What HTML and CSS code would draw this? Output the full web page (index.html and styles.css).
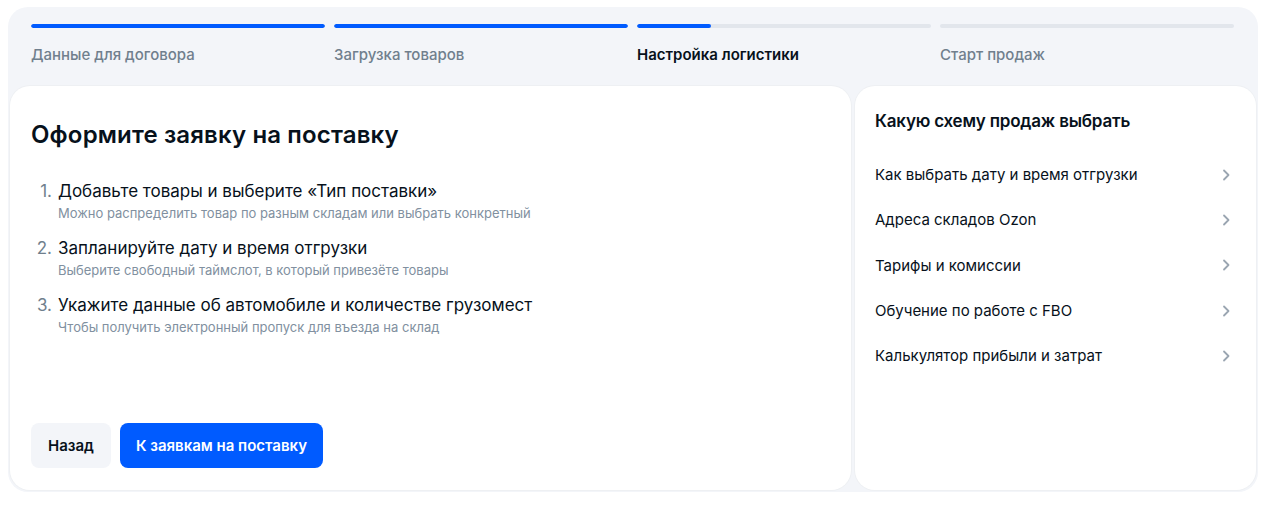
FILE: index.html
```html
<!DOCTYPE html>
<html lang="ru">
<head>
  <meta charset="UTF-8">
  <meta name="viewport" content="width=device-width, initial-scale=1.0">
  <title>Настройка логистики</title>
  <link rel="stylesheet" href="styles.css">
</head>
<body>
  <div class="wizard">
    <!-- шаги -->
    <div class="steps">
      <div class="step done">
        <div class="bar"><span class="fill"></span></div>
        <div class="label">Данные для договора</div>
      </div>
      <div class="step done">
        <div class="bar"><span class="fill"></span></div>
        <div class="label">Загрузка товаров</div>
      </div>
      <div class="step active">
        <div class="bar"><span class="fill"></span></div>
        <div class="label">Настройка логистики</div>
      </div>
      <div class="step">
        <div class="bar"><span class="fill"></span></div>
        <div class="label">Старт продаж</div>
      </div>
    </div>

    <div class="content">
      <div class="card main">
        <h1>Оформите заявку на поставку</h1>
        <ol class="todo">
          <li>
            <span class="num">1.</span>
            <div>
              <div class="todo-title">Добавьте товары и выберите «Тип поставки»</div>
              <div class="todo-hint">Можно распределить товар по разным складам или выбрать конкретный</div>
            </div>
          </li>
          <li>
            <span class="num">2.</span>
            <div>
              <div class="todo-title">Запланируйте дату и время отгрузки</div>
              <div class="todo-hint">Выберите свободный таймслот, в который привезёте товары</div>
            </div>
          </li>
          <li>
            <span class="num">3.</span>
            <div>
              <div class="todo-title">Укажите данные об автомобиле и количестве грузомест</div>
              <div class="todo-hint">Чтобы получить электронный пропуск для въезда на склад</div>
            </div>
          </li>
        </ol>
        <div class="actions">
          <button class="btn secondary">Назад</button>
          <button class="btn primary">К заявкам на поставку</button>
        </div>
      </div>

      <div class="card side">
        <h2>Какую схему продаж выбрать</h2>
        <ul class="links">
          <li><span>Как выбрать дату и время отгрузки</span><svg viewBox="0 0 16 16"><path d="M6 3.5l4.5 4.5L6 12.5"/></svg></li>
          <li><span>Адреса складов Ozon</span><svg viewBox="0 0 16 16"><path d="M6 3.5l4.5 4.5L6 12.5"/></svg></li>
          <li><span>Тарифы и комиссии</span><svg viewBox="0 0 16 16"><path d="M6 3.5l4.5 4.5L6 12.5"/></svg></li>
          <li><span>Обучение по работе с FBO</span><svg viewBox="0 0 16 16"><path d="M6 3.5l4.5 4.5L6 12.5"/></svg></li>
          <li><span>Калькулятор прибыли и затрат</span><svg viewBox="0 0 16 16"><path d="M6 3.5l4.5 4.5L6 12.5"/></svg></li>
        </ul>
      </div>
    </div>
  </div>
</body>
</html>
```

FILE: styles.css
```css
body {
  margin: 0;
  background: #ffffff;
  font-family: Inter, 'Noto Sans', sans-serif;
  color: #001a34;
}

.wizard {
  width: 1250px;
  margin: 7px 0 0 8px;
  background: #f3f5f9;
  border-radius: 20px;
  padding: 0 2px 2px;
  box-sizing: border-box;
}

/* шаги */
.steps {
  display: grid;
  grid-template-columns: repeat(4, 1fr);
  gap: 9px;
  padding: 17px 22px 0 21px;
  height: 79px;
  box-sizing: border-box;
}

.bar {
  height: 4px;
  border-radius: 2px;
  background: #e2e6ec;
  overflow: hidden;
}

.fill {
  display: block;
  height: 100%;
  width: 0;
  background: #005bff;
  border-radius: 2px;
}

.step.done .fill { width: 100%; }
.step.active .fill { width: 25%; }

.label {
  margin-top: 17px;
  font-size: 15px;
  font-weight: 500;
  color: #707f8d;
}

.step.active .label {
  color: #07111b;
  font-weight: 600;
}

/* карточки */
.content {
  display: flex;
  gap: 4px;
}

.card {
  background: #ffffff;
  border-radius: 20px;
  height: 404px;
  box-sizing: border-box;
  box-shadow: 0 0 0 1px #eef0f3;
}

.main {
  width: 841px;
  padding: 34px 21px 22px;
  display: flex;
  flex-direction: column;
}

.main h1 {
  margin: 0;
  font-size: 24px;
  font-weight: 600;
  color: #07111b;
  letter-spacing: 0.15px;
}

.todo {
  list-style: none;
  margin: 30px 0 0;
  padding: 0;
}

.todo li {
  display: flex;
  gap: 6px;
  margin-bottom: 14px;
}

.num {
  width: 21px;
  text-align: right;
  font-size: 17px;
  color: #707f8d;
  line-height: 24px;
}

.todo-title {
  font-size: 17px;
  line-height: 24px;
  color: #07111b;
}

.todo-hint {
  margin-top: 1px;
  font-size: 13px;
  line-height: 18px;
  color: #8190a0;
}

.actions {
  margin-top: auto;
  display: flex;
  gap: 9px;
}

.btn {
  height: 45px;
  border: none;
  border-radius: 8px;
  padding: 0 17px;
  font-family: inherit;
  font-size: 15px;
  font-weight: 600;
  cursor: pointer;
}

.btn.secondary {
  background: #f3f5f9;
  color: #07111b;
}

.btn.primary {
  background: #005bff;
  color: #ffffff;
  padding: 0 16px;
}

.side {
  width: 401px;
  padding: 25px 20px 0;
}

.side h2 {
  margin: 0;
  font-size: 17px;
  font-weight: 600;
  color: #07111b;
  letter-spacing: -0.2px;
}

.links {
  list-style: none;
  margin: 21px 0 0;
  padding: 0;
}

.links li {
  display: flex;
  align-items: center;
  justify-content: space-between;
  height: 45.3px;
  font-size: 15px;
  color: #07111b;
}

.links svg {
  width: 16px;
  height: 16px;
  margin-right: 2px;
  fill: none;
  stroke: #9aa5b1;
  stroke-width: 1.8;
  stroke-linecap: round;
  stroke-linejoin: round;
}
```
